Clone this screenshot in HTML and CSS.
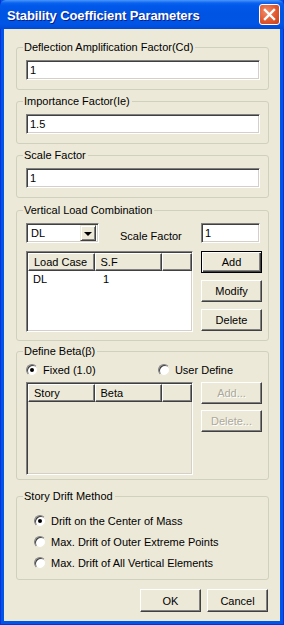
FILE: index.html
```html
<!DOCTYPE html>
<html lang="en">
<head>
    <meta charset="UTF-8">
    <title>Stability Coefficient Parameters</title>
<link rel="stylesheet" href="styles.css">
</head>
<body>
    <div class="window">
        <div class="titlebar">
            <span class="title">Stability Coefficient Parameters</span>
            <span class="close">
                <svg width="13" height="13" viewBox="0 0 13 13"><path d="M2 2 L11 11 M11 2 L2 11" stroke="#fff" stroke-width="2.4" stroke-linecap="square"/></svg>
            </span>
        </div>
        <div class="client">
            <fieldset class="group g1">
                <legend>Deflection Amplification Factor(Cd)</legend>
                <div class="edit">1</div>
            </fieldset>
            <fieldset class="group g2">
                <legend>Importance Factor(Ie)</legend>
                <div class="edit">1.5</div>
            </fieldset>
            <fieldset class="group g3">
                <legend>Scale Factor</legend>
                <div class="edit">1</div>
            </fieldset>

            <!-- load combination -->
            <fieldset class="group g4">
                <legend>Vertical Load Combination</legend>
                <div class="combo-row">
                    <div class="combo">
                        <span class="combo-text">DL</span>
                        <span class="drop"><span class="arrow"></span></span>
                    </div>
                    <span class="sf-label">Scale Factor</span>
                    <div class="edit sf">1</div>
                </div>
                <div class="list-row">
                    <div class="list lc">
                        <div class="head">
                            <span class="col c1">Load Case</span>
                            <span class="col c2">S.F</span>
                            <span class="col c3"></span>
                        </div>
                        <div class="item">
                            <span class="cell c1">DL</span>
                            <span class="cell c2">1</span>
                        </div>
                    </div>
                    <div class="btns">
                        <button class="btn default">Add</button>
                        <button class="btn">Modify</button>
                        <button class="btn">Delete</button>
                    </div>
                </div>
            </fieldset>

            <!-- beta -->
            <fieldset class="group g5">
                <legend>Define Beta(β)</legend>
                <div class="radio-row">
                    <label class="opt"><span class="radio on"></span>Fixed (1.0)</label>
                    <label class="opt user"><span class="radio"></span>User Define</label>
                </div>
                <div class="list-row beta-row">
                    <div class="list bl">
                        <div class="head">
                            <span class="col c1">Story</span>
                            <span class="col c2">Beta</span>
                            <span class="col c3"></span>
                        </div>
                    </div>
                    <div class="btns tight">
                        <button class="btn" disabled>Add...</button>
                        <button class="btn" disabled>Delete...</button>
                    </div>
                </div>
            </fieldset>

            <fieldset class="group g6">
                <legend>Story Drift Method</legend>
                <label class="opt drift"><span class="radio on"></span>Drift on the Center of Mass</label>
                <label class="opt drift"><span class="radio"></span>Max. Drift of Outer Extreme Points</label>
                <label class="opt drift"><span class="radio"></span>Max. Drift of All Vertical Elements</label>
            </fieldset>

            <div class="footer">
                <button class="btn wide">OK</button>
                <button class="btn wide">Cancel</button>
            </div>
        </div>
    </div>
</body>
</html>
```

FILE: styles.css
```css
html, body{
    margin: 0;
    padding: 0;
    background: #fff;
}
body{
    font-family: "Liberation Sans", Arial, sans-serif;
    font-size: 11px;
    color: #000;
}
.window{
    width: 284px;
    height: 625px;
    display: flex;
    flex-direction: column;
    background: #0055E6;
    box-sizing: border-box;
    border: 1px solid #0831D9;
    border-top: none;
}
.titlebar{
    height: 29px;
    flex: none;
    margin: 0 -1px;
    display: flex;
    align-items: center;
    justify-content: space-between;
    padding: 0 4px 0 7px;
    background: linear-gradient(#4A97F9 0, #0A62EF 3px, #0058EA 6px, #0054E3 14px, #0055E6 24px, #0049D6 29px);
    border-radius: 6px 6px 0 0;
}
.title{
    color: #fff;
    font-weight: bold;
    font-size: 13px;
    letter-spacing: -0.1px;
    text-shadow: 1px 1px #0A1E8A;
    margin-top: 1px;
}
.close{
    width: 21px;
    height: 21px;
    box-sizing: border-box;
    border: 1px solid #fff;
    border-radius: 3px;
    background: radial-gradient(circle at 35% 35%, #F08D6C 0, #E0582E 55%, #C4401B 100%);
    display: flex;
    align-items: center;
    justify-content: center;
}
.close svg{
    display: block;
}
.client{
    flex: 1;
    margin: 0 3px 3px;
    background: #ECE9D8;
    padding: 12px 11px 0 12px;
    display: flex;
    flex-direction: column;
}

/* group boxes */
.group{
    margin: 0;
    border: 1px solid #D0D0BF;
    border-radius: 3px;
    padding: 6px 8px 9px 9px;
    min-width: 0;
}
.group legend{
    padding: 0 2px 0 1px;
    margin-left: -3px;
    line-height: 13px;
}
.g2, .g3{ margin-top: 5px; }
.g4{ margin-top: 6px; padding-bottom: 8px; }
.g5{ margin-top: 4px; padding-top: 4px; padding-bottom: 4px; }
.g6{ margin-top: 10px; padding-top: 7px; padding-bottom: 6px; }

/* sunken edit */
.edit{
    height: 20px;
    box-sizing: border-box;
    background: #fff;
    border: 1px solid;
    border-color: #808080 #fff #fff #808080;
    box-shadow: inset 1px 1px #404040, inset -1px -1px #D4D0C8;
    padding: 0 3px;
    line-height: 18px;
    white-space: nowrap;
}

.combo-row{
    display: flex;
    align-items: center;
    height: 20px;
}
.combo{
    width: 73px;
    height: 20px;
    box-sizing: border-box;
    background: #fff;
    border: 1px solid;
    border-color: #808080 #fff #fff #808080;
    box-shadow: inset 1px 1px #404040, inset -1px -1px #D4D0C8;
    display: flex;
    align-items: center;
    padding: 2px;
}
.combo-text{
    flex: 1;
    padding-left: 2px;
}
.drop{
    width: 16px;
    height: 16px;
    box-sizing: border-box;
    background: #ECE9D8;
    border: 1px solid;
    border-color: #ECE9D8 #404040 #404040 #ECE9D8;
    box-shadow: inset 1px 1px #fff, inset -1px -1px #808080;
    display: flex;
    align-items: center;
    justify-content: center;
}
.arrow{
    width: 0;
    height: 0;
    border-left: 4px solid transparent;
    border-right: 4px solid transparent;
    border-top: 4px solid #000;
    margin-top: 1px;
}
.sf-label{
    margin-left: 21px;
    margin-top: 6px;
    font-size: 11px;
}
.edit.sf{
    width: 59px;
    margin-left: auto;
}

.list-row{
    display: flex;
    margin-top: 8px;
    margin-right: -2px;
    gap: 8px;
}
.beta-row{
    margin-top: 4px;
}
.list{
    width: 167px;
    box-sizing: border-box;
    background: #fff;
    border: 1px solid;
    border-color: #808080 #fff #fff #808080;
    box-shadow: inset 1px 1px #404040, inset -1px -1px #D4D0C8;
    padding: 1px 0 0 1px;
    overflow: hidden;
}
.list.lc{ height: 81px; }
.list.bl{
    height: 93px;
    background: #ECE9D8;
}
.head{
    display: flex;
    height: 18px;
}
.col{
    box-sizing: border-box;
    height: 18px;
    background: #ECE9D8;
    border: 1px solid;
    border-color: #fff #404040 #404040 #fff;
    box-shadow: inset -1px -1px #808080;
    padding-left: 5px;
    line-height: 16px;
}
.col.c1, .cell.c1{ width: 70px; }
.col.c2, .cell.c2{ width: 71px; }
.col.c3{ width: 30px; flex: none; }
.item{
    display: flex;
    margin-top: 1px;
    line-height: 15px;
}
.cell{
    padding-left: 5px;
    box-sizing: border-box;
}

/* buttons */
.btns{
    display: flex;
    flex-direction: column;
    gap: 6px;
    width: 61px;
}
.btns.tight{ gap: 5px; }
.btn{
    width: 61px;
    height: 22px;
    box-sizing: border-box;
    margin: 0;
    padding: 0;
    font: 11px "Liberation Sans", Arial, sans-serif;
    color: #000;
    background: #ECE9D8;
    border: 1px solid;
    border-color: #fff #404040 #404040 #fff;
    box-shadow: inset -1px -1px #808080;
}
.btn.default{
    border-color: #000;
    box-shadow: inset 1px 1px #fff, inset -1px -1px #404040, inset -2px -2px #808080;
}
.btn:disabled{
    color: #ACA899;
    text-shadow: 1px 1px #fff;
}
.btns .btn + .btn{ margin-top: 1px; }

/* radios */
.radio-row{
    display: flex;
    height: 16px;
    align-items: center;
}
.opt{
    display: flex;
    align-items: center;
}
.opt.user{
    margin-left: auto;
    margin-right: 27px;
}
.radio{
    width: 12px;
    height: 12px;
    box-sizing: border-box;
    border-radius: 50%;
    background: #fff;
    border: 1px solid;
    border-color: #808080 #ECE9D8 #ECE9D8 #808080;
    box-shadow: inset 1px 1px #404040;
    margin-right: 5px;
    position: relative;
}
.radio.on::after{
    content: "";
    position: absolute;
    left: 3px;
    top: 3px;
    width: 4px;
    height: 4px;
    border-radius: 50%;
    background: #000;
}
.opt.drift{
    height: 21px;
    padding-left: 8px;
}

.footer{
    display: flex;
    justify-content: flex-end;
    gap: 6px;
    margin-top: 9px;
    margin-right: 1px;
}
.btn.wide{
    width: 61px;
    height: 23px;
}
```
